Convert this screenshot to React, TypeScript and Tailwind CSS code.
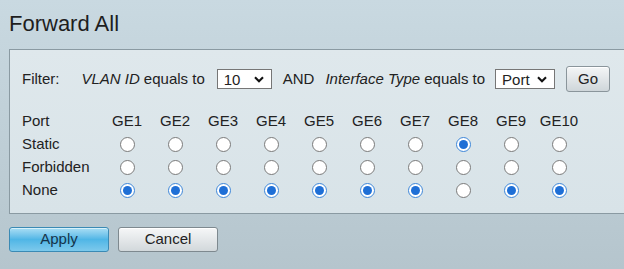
import React from "react";

const PORTS = ["GE1", "GE2", "GE3", "GE4", "GE5", "GE6", "GE7", "GE8", "GE9", "GE10"];

// value per port: S = static, N = none
const initial: Record<string, "static" | "forbidden" | "none"> = {
  GE1: "none", GE2: "none", GE3: "none", GE4: "none", GE5: "none",
  GE6: "none", GE7: "none", GE8: "static", GE9: "none", GE10: "none",
};

const ROWS: { key: "static" | "forbidden" | "none"; label: string }[] = [
  { key: "static", label: "Static" },
  { key: "forbidden", label: "Forbidden" },
  { key: "none", label: "None" },
];

function Radio({ checked, onClick }: { checked: boolean; onClick: () => void }) {
  return (
    <button
      onClick={onClick}
      className={`flex h-[15px] w-[15px] items-center justify-center rounded-full border bg-white ${
        checked ? "border-[#3d86d8]" : "border-[#7a7a7a]"
      }`}
    >
      {checked && <span className="h-[9px] w-[9px] rounded-full bg-[#1f6fd6]" />}
    </button>
  );
}

function FakeSelect({ value, width }: { value: string; width: string }) {
  return (
    <div className={`flex h-[20px] items-center justify-between border border-[#767676] bg-white pl-[6px] pr-[7px] ${width}`}>
      <span className="leading-none">{value}</span>
      <svg width="10" height="7" viewBox="0 0 10 7">
        <path d="M1 1.2 L5 5.2 L9 1.2" fill="none" stroke="#111" strokeWidth="2.1" />
      </svg>
    </div>
  );
}

export default function App() {
  const [sel, setSel] = React.useState(initial);

  return (
    <div className="h-[269px] w-[624px] overflow-hidden bg-gradient-to-b from-[#c9d9e1] to-[#b5c5cd] font-['Liberation_Sans',Arial,sans-serif] text-[15px] text-[#222]">
      {/* Title */}
      <h1 className="pl-[9px] pt-[11px] text-[22px] leading-[25px] text-[#1e1e1e]">Forward All</h1>

      {/* Panel */}
      <div className="ml-[9px] mt-[13px] border-b border-l border-t border-[#8a9aa2] bg-gradient-to-b from-[#dfe8ec] to-[#d8e3e8] pb-[11px] pl-[12px] pt-[16px]">
        {/* Filter row */}
        <div className="flex h-[26px] items-center">
          <span>Filter:</span>
          <span className="ml-[22px] italic">VLAN ID</span>
          <span className="ml-[4px]">equals to</span>
          <div className="ml-[12px]">
            <FakeSelect value="10" width="w-[55px]" />
          </div>
          <span className="ml-[11px]">AND</span>
          <span className="ml-[11px] italic">Interface Type</span>
          <span className="ml-[4px]">equals to</span>
          <div className="ml-[10px]">
            <FakeSelect value="Port" width="w-[60px]" />
          </div>
          <button className="ml-[11px] h-[26px] w-[44px] rounded-[3px] border border-[#8a959b] bg-gradient-to-b from-[#f4f6f7] to-[#cfd6da] text-[15px] text-[#222] shadow-[inset_0_1px_0_#fff]">
            Go
          </button>
        </div>

        {/* Port table */}
        <div className="mt-[18px] grid grid-cols-[81px_repeat(10,48px)]">
          <div className="flex h-[23px] items-center">Port</div>
          {PORTS.map((p) => (
            <div key={p} className="flex h-[23px] items-center justify-center">{p}</div>
          ))}
          {ROWS.map((r) => (
            <React.Fragment key={r.key}>
              <div className="flex h-[23px] items-center">{r.label}</div>
              {PORTS.map((p) => (
                <div key={p} className="flex h-[23px] items-center justify-center">
                  <Radio checked={sel[p] === r.key} onClick={() => setSel({ ...sel, [p]: r.key })} />
                </div>
              ))}
            </React.Fragment>
          ))}
        </div>
      </div>

      {/* Buttons */}
      <div className="ml-[9px] mt-[13px] flex gap-[9px]">
        <button className="h-[25px] w-[100px] rounded-[3px] border border-[#3b8ab4] bg-gradient-to-b from-[#a9def4] via-[#4fb6e6] to-[#7cc9ec] text-[15px] text-[#16344a] shadow-[inset_0_1px_0_#d6f1fb]">
          Apply
        </button>
        <button className="h-[25px] w-[100px] rounded-[3px] border border-[#7e898f] bg-gradient-to-b from-[#f6f7f8] to-[#d2d8db] text-[15px] text-[#222] shadow-[inset_0_1px_0_#fff]">
          Cancel
        </button>
      </div>
    </div>
  );
}
